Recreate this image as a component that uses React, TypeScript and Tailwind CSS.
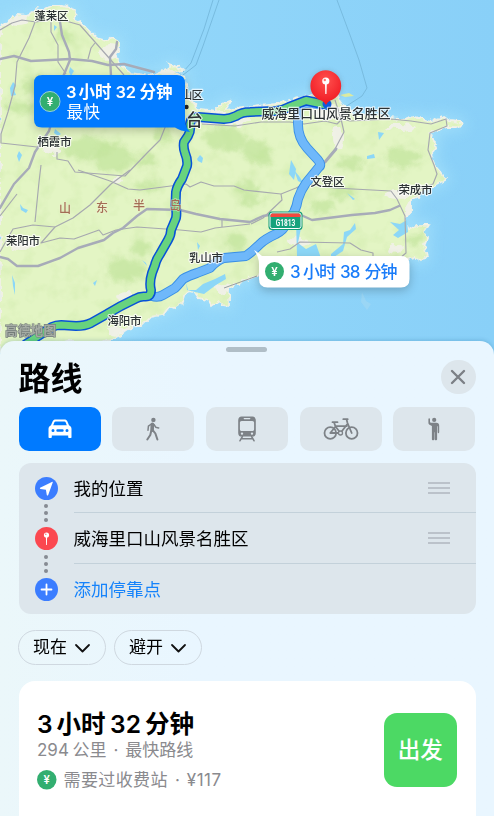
import React from "react";

const cjk = "font-['Inter','Noto_Sans_CJK_SC',sans-serif]";

const LAND =
  "M0 27L7 23L11 18L17 15L25 16L32 13L36 9L44 11L52 6L63 6L75 10L74 19L83 25L90 32L97 38L107 41L112 37L119 41L119 50L116 55L120 65L130 73L150 76L162 71L168 70L172 67L167 62L180 68L183 70L173 73L184 77L189 98L200 110L217 112L220 105L230 101L225 110L244 108L277 104L304 97L320 94L336 91L339 100L343 106L355 114L391 118L404 120L414 117L431 121L444 117L450 121L461 122L462 125L457 127L447 127L431 133L430 137L437 144L431 153L433 160L436 167L442 174L446 179L434 186L421 190L417 197L411 200L411 213L405 218L407 230L416 225L428 225L424 231L427 237L424 245L427 255L421 262L414 257L407 259L400 259L385 263L340 265L260 275L250 278L238 284L229 287L229 306L222 305L219 300L211 306L208 301L199 298L195 292L187 291L183 303L174 309L169 307L163 315L150 317L141 326L134 326L120 335L105 341L90 345L70 347L55 354L0 354Z";

const ROADS = [
  "M0 30L12 23L22 20L36 22L58 18L66 21L80 25L95 42L124 75",
  "M35 22L29 38L17 62L15 86L8 112L1 134L1 143L37 147",
  "M51 22L51 32L58 45L58 62L66 74",
  "M95 43L91 48L88 59",
  "M57 152L57 159L68 161L75 172L125 176L148 152L160 140L168 120",
  "M78 170L110 181L128 189L140 190L186 184L190 187L201 182L214 186L234 186L244 190L281 194L296 188L304 184",
  "M41 165L39 182L35 222",
  "M130 170L111 184L90 205L73 218L55 227L33 225L13 229L0 252",
  "M55 227L41 243L60 238L74 239L99 230L103 235L116 230L137 227L180 230L201 232L215 228L250 224",
  "M202 124L235 126L261 122L290 122L304 124L325 121L337 124L342 119L350 121L391 119L411 121L431 124L446 119L447 126L430 133L428 150L434 165L437 174L433 184L420 189L397 191",
  "M335 100L341 119L344 132L335 149L328 158",
  "M304 184L315 185L334 188L391 191L397 199L405 216L406 253L400 258",
  "M281 194L282 200L263 218L251 224",
  "M277 252L290 249L300 242L350 243L361 250L373 253L373 262",
  "M222 219L222 227",
  "M0 216L17 194",
];

const TRUNKS = [
  "M0 59L14 56L31 61L70 59L92 61L108 65L124 64L154 72",
  "M60 22L62 35L69 52L70 60L60 84L55 110L49 131L35 152L29 168L14 184L0 208",
  "M117 42L116 49L110 57L111 76",
  "M0 257L8 259L17 266L38 266L60 258L78 248L104 240L113 233L123 228L137 216L147 209L180 210L196 214L220 219L250 222L263 216L281 213L301 215L312 220L352 215L375 213L390 210L399 206",
];

const LAKES = [
  "M13 82l3 3l-2 5l2 5l-5 1l-1-8z",
  "M54 25l3 2l-3 4z",
  "M70 67l4 4l-3 5l-2-4z",
  "M19 151l3 4l-3 7l-2-6z",
  "M55 129l6 5l-3 2l-4-3z",
  "M197 159l3-4l3 3l-1 5l-4-2z",
  "M20 204l3 4l5 2l-2 3l-5-3z",
  "M12 275l3 8l0 12l-2-9z",
  "M93 283l4-3l-2 6z",
  "M142 260l4 3l1 3z",
  "M197 242l3 4l-2 4z",
  "M378 132l6 1l-5 7z",
  "M367 156l7-2l1 4l-8 1z",
  "M291 160l5 9l-2 11l-5-6z",
  "M347 193l8 6l-2 1z",
  "M236 11l2 3z",
  "M390 222l10 2l7-4l1 12l-10 6l-5-3l6-5z",
  "M294 170l5 6l5 8l-6-3z",
  "M296 220l5 8l-3 15l8 6l10-5l5 14l-24-2z",
  "M355 223l-5 7l-6 2l-1 12l-12 10l0 5l12-8l4-14l9-8z",
  "M186 282l2 8l8 0l7-6l12-5l10-5l1 5l-10 6l-12 9l-9-2l-8-2z",
];

const HILLS: [number, number, number, number][] = [
  [41, 87, 18, 10], [90, 92, 28, 10], [88, 148, 26, 11], [113, 157, 20, 14],
  [18, 107, 14, 7], [126, 270, 19, 12], [142, 248, 10, 7], [148, 186, 14, 6],
  [225, 138, 22, 12], [255, 150, 14, 10], [237, 243, 9, 12], [246, 189, 12, 8],
  [403, 157, 18, 10], [350, 163, 13, 7], [263, 159, 10, 7], [342, 193, 12, 6],
  [323, 207, 13, 6], [416, 240, 9, 5], [65, 35, 8, 7], [162, 135, 9, 9],
  [145, 161, 12, 7], [252, 201, 12, 5],
];

const URBAN: [number, number, number, number][] = [
  [24, 245, 12, 6], [52, 150, 7, 4], [127, 298, 9, 6], [208, 258, 8, 4],
  [225, 120, 25, 6], [398, 194, 12, 5], [330, 113, 20, 7], [338, 137, 5, 13],
  [110, 52, 12, 8], [170, 74, 12, 5], [400, 127, 15, 3], [120, 331, 14, 4],
  [75, 343, 15, 3], [222, 288, 10, 4], [300, 242, 12, 4], [410, 212, 4, 11],
  [118, 181, 5, 3], [395, 249, 8, 5], [18, 20, 12, 4],
];

const MAIN = "M10 355L26 344Q31 341 38 336L52 327Q56 325 61 325L76 326Q85 326 91 323L107 314Q120 306 135 299Q140 296 145 296.500Q151 297 151 290Q149 283 152 273L155 265Q156 260 160 254L168 240Q171 235 171 230Q174 223 176 218Q177 212 175.500 206L176 192Q177 186 182 179L187 166Q188 160 185 153Q183 147 184 142L188 136Q191 131 190 124Q191 117 198 117L224 119Q230 119 236 116Q242 112 250 112L276 111Q284 110 289 107L306 100.500L318 103L326 105";
const ALT = "M152 296Q158 298 163 295L175 288Q178 285 183 279Q188 276 197 273L210 268Q216 261 224 258L246 256Q253 251 260 244Q265 239 276 234Q284 230 286 224Q290 217 294 212Q297 206 298 199Q301 190 306 183L319 167Q322 165 318 160L307 148Q298 138 298 124L298 112Q299 103 308 103L326 105";

function Label({ x, y, children, size = 11.5, width }: { x: number; y: number; children: string; size?: number; width?: number }) {
  return (
    <text x={x} y={y} fontSize={size} textLength={width} textAnchor="middle" fontWeight="500" fill="#2c3234" stroke="#ffffff" strokeWidth="2.2" strokeOpacity=".75" strokeLinejoin="round" paintOrder="stroke">
      {children}
    </text>
  );
}

function YenDot({ cx, cy, r, ring }: { cx: number; cy: number; r: number; ring?: boolean }) {
  return (
    <g>
      <circle cx={cx} cy={cy} r={r} fill="#32ae70" stroke={ring ? "#9bd3d5" : "none"} strokeWidth="1" />
      <text x={cx} y={cy + 4.2} textAnchor="middle" fontSize="11.5" fontWeight="600" fill="white">¥</text>
    </g>
  );
}

function RouteMap() {
  return (
    <svg width="494" height="353" viewBox="0 0 494 353" className={`block shrink-0 ${cjk}`} colorInterpolationFilters="sRGB">
      <defs>
        <clipPath id="land"><path d={LAND} /></clipPath>
        <filter id="soft" x="-30%" y="-30%" width="160%" height="160%"><feGaussianBlur stdDeviation="2.6" /></filter>
        <filter id="shore" x="-10%" y="-10%" width="120%" height="120%"><feGaussianBlur stdDeviation="7" /></filter>
        <filter id="rough" x="-10%" y="-10%" width="120%" height="120%">
          <feTurbulence type="fractalNoise" baseFrequency=".11" numOctaves="2" seed="4" result="n" />
          <feDisplacementMap in="SourceGraphic" in2="n" scale="12" xChannelSelector="R" yChannelSelector="G" />
        </filter>
        <filter id="coast" x="-5%" y="-5%" width="110%" height="110%">
          <feTurbulence type="fractalNoise" baseFrequency=".17" numOctaves="2" seed="9" result="n" />
          <feDisplacementMap in="SourceGraphic" in2="n" scale="7" xChannelSelector="R" yChannelSelector="G" />
        </filter>
        <filter id="relief" x="0" y="0" width="100%" height="100%">
          <feTurbulence type="fractalNoise" baseFrequency=".06" numOctaves="3" seed="12" />
          <feColorMatrix values="0 0 0 0 .74  0 0 0 0 .88  0 0 0 0 .58  2.2 0 0 0 -1.05" />
        </filter>
        <filter id="shade" x="-20%" y="-30%" width="140%" height="180%"><feDropShadow dx="0" dy="3" stdDeviation="5" floodOpacity=".22" /></filter>
        <linearGradient id="sea" x1="0" y1="0" x2="1" y2="0"><stop stopColor="#96d9fa" /><stop offset="1" stopColor="#89d0f8" /></linearGradient>
        <radialGradient id="pin" cx=".5" cy=".3" r=".7"><stop stopColor="#ff514e" /><stop offset="1" stopColor="#ef1721" /></radialGradient>
      </defs>
      <rect width="494" height="353" fill="url(#sea)" />
      <path d={LAND} fill="#a4e1fb" stroke="#a4e1fb" strokeWidth="8" filter="url(#shore)" opacity=".8" />
      <g fill="none" stroke="#78bbdf" strokeWidth="1">
        <path d="M213 0L204 29L191 63L183 72M219 0L203 46L196 65L183 75" />
        <path d="M337 0L350 35L359 60L367 88L362 96L345 107" />
      </g>
      <path d={LAND} fill="#e3f5c4" stroke="#f1f1e8" strokeWidth="1.8" filter="url(#coast)" />
      <g clipPath="url(#land)">
        <rect width="494" height="353" filter="url(#relief)" opacity=".3" />
        <g filter="url(#rough)"><g filter="url(#soft)" fill="#c3e49d">
          {HILLS.map(([x, y, rx, ry]) => <ellipse key={`${x}-${y}`} cx={x} cy={y} rx={rx} ry={ry} opacity=".75" />)}
        </g></g>
        <g filter="url(#rough)" fill="#f2f0ec">
          {URBAN.map(([x, y, rx, ry]) => <ellipse key={`${x}-${y}`} cx={x} cy={y} rx={rx} ry={ry} opacity=".85" />)}
        </g>
      </g>
      <g fill="#8cd7f7">{LAKES.map((d) => <path key={d} d={d} />)}</g>
      <path d="M340 95l9-2l5 3l-9 1z" fill="#dceaa0" />
      <path d="M362 292l4 9l5 3l-4 6l-6-8z" fill="#aeddef" opacity=".4" />
      <g fill="none" stroke="#a6a8af" strokeWidth="1.15" strokeLinejoin="round">{ROADS.map((d) => <path key={d} d={d} />)}</g>
      <g fill="none" stroke="#a7abb8" strokeWidth="2.4" strokeLinejoin="round" strokeLinecap="round">{TRUNKS.map((d) => <path key={d} d={d} />)}<path d="M325 162L336 149" strokeWidth="3" /></g>
      <path d="M224 288L257 276" stroke="#999da0" strokeWidth="1" />

      <g fill="none" strokeLinejoin="round" strokeLinecap="round">
        <path d={ALT} stroke="#388fe6" strokeWidth="9.8" />
        <path d={ALT} stroke="#6fb8fa" strokeWidth="8" />
        <path d={MAIN} stroke="#0751d8" strokeWidth="10" />
        <path d={MAIN} stroke="#68d37e" strokeWidth="7" />
      </g>
      <circle cx="327" cy="104" r="4.5" fill="#0d5ce0" />

      <Label x={51.5} y={20} width={34}>蓬莱区</Label>
      <Label x={192} y={99} width={22}>山区</Label>
      <circle cx="186.5" cy="107" r="2.2" fill="#222" />
      <Label x={194.5} y={126} size={16.5}>台</Label>
      <Label x={54.5} y={146} width={34}>栖霞市</Label>
      <Label x={23} y={245} width={34}>莱阳市</Label>
      <Label x={206} y={262} width={34}>乳山市</Label>
      <Label x={124.5} y={325} width={34}>海阳市</Label>
      <Label x={327.5} y={185.5} width={34}>文登区</Label>
      <Label x={415.5} y={193.5} width={34}>荣成市</Label>
      <Label x={326} y={118} size={12.8} width={129}>威海里口山风景名胜区</Label>
      <g fontSize="12" fill="#a36d55" stroke="#f3eed2" strokeWidth="1" strokeOpacity=".6" paintOrder="stroke" textAnchor="middle" fontWeight="500">
        <text x="65" y="213">山</text><text x="102" y="211.5">东</text><text x="139" y="210">半</text><text x="175.5" y="209.5">岛</text>
      </g>
      <text x="5" y="335" fontSize="12.6" textLength="51" fontWeight="700" fill="#a5aca4" stroke="#747c7a" strokeWidth="1.1" paintOrder="stroke">高德地图</text>

      <rect x="268.5" y="211.5" width="34" height="18.5" rx="3.5" fill="#109b75" />
      <rect x="270" y="213" width="31" height="15.5" rx="2.2" fill="#16a27c" stroke="#fff" strokeWidth="1" />
      <path d="M270.500 217v-1.500q0-2 2-2h26q2 0 2 2v1.500z" fill="#f3483f" />
      <text x="285.5" y="225.5" textAnchor="middle" fontSize="8.2" textLength="19.5" lengthAdjust="spacingAndGlyphs" fontWeight="700" fill="#fff" className="font-['Roboto']">G1813</text>

      <g filter="url(#shade)">
        <path d="M42 75H177Q185 75 185 83V121Q185 127 190 132Q180 131 175 127.500H42Q34 127.500 34 119.500V83Q34 75 42 75Z" fill="#007aff" />
      </g>
      <YenDot cx={50} cy={101.5} r={10} ring />
      <g fill="white" fontWeight="600" fontSize="16.5">
        <text x="66" y="97.5">3</text><text x="78.5" y="97.5" textLength="33">小时</text>
        <text x="115.5" y="97.5" textLength="20.5">32</text><text x="139.5" y="97.5" textLength="33">分钟</text>
        <text x="66.5" y="118" fontWeight="400" textLength="33.5">最快</text>
      </g>

      <g filter="url(#shade)">
        <path d="M254 250Q256 251 262 256H401Q409.500 256 409.500 264.500V279Q409.500 287.500 401 287.500H267.500Q259 287.500 259 279V264Q259 257 254 250Z" fill="#fff" />
      </g>
      <YenDot cx={274.5} cy={271.5} r={9.5} />
      <g fill="#1a7cf9" fontWeight="500" fontSize="17">
        <text x="290" y="278">3</text><text x="303" y="278" textLength="33">小时</text>
        <text x="340" y="278" textLength="20.5">38</text><text x="364.5" y="278" textLength="33">分钟</text>
      </g>

      <circle cx="325.8" cy="86.5" r="16" fill="#555" opacity=".25" filter="url(#soft)" />
      <path d="M325.800 70.200a15.500 15.500 0 0 1 4.500 30.300Q327.500 101.500 326 105Q324.200 101.500 321.300 100.500A15.500 15.500 0 0 1 325.800 70.200Z" fill="url(#pin)" />
      <circle cx="325.8" cy="81" r="3.6" fill="#fff" /><circle cx="324.8" cy="80" r="1.2" fill="#ff7471" />
      <path d="M325 84h1.800l-.3 10h-1.200z" fill="#fff" />
    </svg>
  );
}

const CarIcon = () => (
  <svg width="26" height="22" viewBox="0 0 26 22" fill="none">
    <path fillRule="evenodd" d="M8.600 1.500h8.800c1.400 0 2.300.5 2.900 1.700l1.700 4c1.600.8 2.500 2 2.500 3.900v7.800c0 .8-.4 1.200-1.200 1.200h-.9c-.8 0-1.200-.5-1.200-1.200v-1.400H4.800v1.400c0 .7-.5 1.200-1.200 1.200h-.9c-.8 0-1.200-.5-1.200-1.200v-7.800c0-1.900.9-3.100 2.500-3.900l1.700-4c.6-1.200 1.500-1.700 2.900-1.700ZM7.400 4.300 6.200 7.200h13.600l-1.200-2.900c-.2-.6-.6-.8-1.200-.8H8.600c-.6 0-1 .2-1.200.8ZM6 11a1.500 1.500 0 1 0 0 3 1.500 1.500 0 0 0 0-3Zm14 0a1.500 1.500 0 1 0 0 3 1.500 1.500 0 0 0 0-3Zm-9.500.3a1.200 1.200 0 0 0 0 2.400h5a1.200 1.200 0 0 0 0-2.400Z" fill="white" />
  </svg>
);
const WalkIcon = () => (
  <svg width="18" height="24" viewBox="0 0 18 24" fill="none" stroke="#7d8287" strokeLinecap="round" strokeLinejoin="round">
    <circle cx="9.4" cy="2.9" r="2.2" fill="#7d8287" stroke="none" />
    <path d="m8.400 7.200-.3 6" strokeWidth="3.600" />
    <path d="m7.400 7-3 2.200-.4 4M10 7.500l1.700 2.700 3 .7" strokeWidth="1.500" />
    <path d="m8.900 13.300 2.500 3.200 2 6M7.200 14l-.9 4-3 4.500" strokeWidth="2" />
  </svg>
);
const TrainIcon = () => (
  <svg width="22" height="26" viewBox="0 0 22 26" fill="none">
    <path fillRule="evenodd" d="M5.500.6h11c1.900 0 3.300 1.700 3.300 3.800v12.500c0 2.200-1.200 3.700-3.300 3.700h-11c-2.100 0-3.300-1.500-3.300-3.700V4.400C2.200 2.300 3.600.6 5.500.6Zm2.800 1.300a.7.7 0 0 0 0 1.400h5.400a.7.7 0 0 0 0-1.400ZM5.700 4.900c-1.100 0-1.800.7-1.800 1.800v6.500c0 1.100.7 1.800 1.800 1.800h10.600c1.100 0 1.800-.7 1.800-1.800V6.700c0-1.100-.7-1.800-1.800-1.800ZM6 16.400a1.200 1.200 0 1 0 0 2.400 1.200 1.200 0 0 0 0-2.400Zm10 0a1.200 1.200 0 1 0 0 2.400 1.200 1.200 0 0 0 0-2.400Z" fill="#7d8287" />
    <path d="m6.400 20.500-2.500 4.300M15.600 20.500l2.500 4.300M5.500 22.700h11" stroke="#7d8287" strokeWidth="1.500" strokeLinecap="round" />
  </svg>
);
const BikeIcon = () => (
  <svg width="36" height="24" viewBox="0 0 36 24" fill="none" stroke="#7d8287" strokeWidth="1.800" strokeLinecap="round" strokeLinejoin="round">
    <circle cx="7.3" cy="16" r="5.8" /><circle cx="28.7" cy="16" r="5.8" />
    <path d="m7.300 16 5.200-6.500 5 6.500H7.300m5.200-6.500-1.500-4.300M9.500 5.200h5M12.700 9.200h11M17.500 16l6.500-8.500M28.700 16 24.500 6l-1-3.800h-3.200M23.500 2.200h1.200" />
    <circle cx="17.5" cy="16" r="2" fill="#dde6ec" strokeWidth="1.300" />
  </svg>
);
const HailIcon = () => (
  <svg width="14" height="24" viewBox="0 0 14 24" fill="#7d8287">
    <circle cx="7.2" cy="2.9" r="2.1" />
    <path d="M3.700 5.800h5.500c2 0 3 1.300 3 3v6.500c0 1.200-1.500 1.200-1.500 0v-6h-.6v13c0 1.400-2.400 1.400-2.400 0v-7h-.4v7c0 1.400-2.400 1.400-2.400 0V9L2.500 7.700c-.9-.5-1.100-1.300-1.100-2.400V2.100c0-1.100 1.600-1.100 1.600 0v3Z" />
  </svg>
);

const MODES = [CarIcon, WalkIcon, TrainIcon, BikeIcon, HailIcon];

const Grip = () => (
  <svg className="mr-[25.5px] shrink-0" width="22" height="12" viewBox="0 0 22 12" stroke="#b0b7bf" strokeWidth="1.300"><path d="M0 1h22M0 6h22M0 11h22" /></svg>
);
const Dots = () => (
  <div className="flex h-[27.5px] flex-col items-center justify-center gap-[3.4px]">
    <i className="size-[3.6px] rounded-full bg-[#868b93]" /><i className="size-[3.6px] rounded-full bg-[#868b93]" /><i className="size-[3.6px] rounded-full bg-[#868b93]" />
  </div>
);

function Chip({ label }: { label: string }) {
  return (
    <button className="flex h-[35px] w-[88px] items-center justify-center gap-[7px] rounded-full border border-[#cfd8e0] pt-px text-[17px] text-black">
      <span>{label}</span>
      <svg width="17" height="11" viewBox="0 0 17 11" fill="none" stroke="#111" strokeWidth="1.800" strokeLinecap="round" strokeLinejoin="round"><path d="m2 2 6.500 6.500L15 2" /></svg>
    </button>
  );
}

function Stops() {
  return (
    <section className="mt-3 flex h-[151px] shrink-0 rounded-xl bg-[#dde6ec]">
      <div className="flex w-[55px] shrink-0 flex-col items-center pt-[13.5px]">
        <svg className="shrink-0" width="23" height="23" viewBox="0 0 23 23"><circle cx="11.5" cy="11.5" r="11.5" fill="#3b7dff" /><path d="M17.700 5.600 13.200 17.900c-.4.900-1.200.9-1.400 0l-.9-5.100-5.300-.8c-1-.2-1-1.100 0-1.500L16.900 4.900c.7-.2 1.100.1.800.7Z" fill="#fff" /></svg>
        <Dots />
        <svg className="shrink-0" width="23" height="23" viewBox="0 0 23 23"><circle cx="11.5" cy="11.5" r="11.5" fill="#fb4850" /><circle cx="11.5" cy="8" r="2.6" fill="#fff" /><circle cx="10.8" cy="7.3" r=".8" fill="#fb7a7d" /><path d="M10.900 10h1.200l-.2 8h-.8z" fill="#fff" /></svg>
        <Dots />
        <svg className="shrink-0" width="23" height="23" viewBox="0 0 23 23"><circle cx="11.5" cy="11.5" r="11.5" fill="#3b7dff" /><path d="M11.500 6.500v10M6.500 11.500h10" stroke="#fff" strokeWidth="1.800" strokeLinecap="round" /></svg>
      </div>
      <div className="flex flex-1 flex-col text-[17.5px] leading-[25px] text-black">
        <div className="flex h-[50px] items-center justify-between border-b border-[#c3d1da] pt-px"><span>我的位置</span><Grip /></div>
        <div className="flex h-[50.5px] items-center justify-between border-b border-[#c3d1da] pt-px"><span>威海里口山风景名胜区</span><Grip /></div>
        <div className="flex h-[50px] items-center pt-px text-[#1583fb]">添加停靠点</div>
      </div>
    </section>
  );
}

export default function App() {
  return (
    <main className={`flex h-[816px] w-[494px] flex-col overflow-hidden bg-[#8fd5f8] ${cjk}`}>
      <RouteMap />
      <div className="relative -mt-3 flex h-[475px] shrink-0 flex-col rounded-t-[14px] bg-[#e9f6fe] bg-linear-to-r from-[#ebf7fa] to-[#e9f6ff] to-40% px-[18.5px] shadow-[0_-1px_4px_rgba(0,80,130,.2)]">
        <div className="mt-[6px] mr-[1px] h-[5px] w-[41px] shrink-0 self-center rounded-full bg-[#b0bec7]" />
        <header className="mt-1 flex h-[51px] shrink-0 items-center justify-between">
          <h1 className="mb-[5px] text-[32px] leading-[46px] font-bold text-black">路线</h1>
          <button aria-label="关闭" className="mb-[9px] flex size-[34.5px] items-center justify-center rounded-full bg-[#dde6ec]">
            <svg width="18" height="18" viewBox="0 0 18 18" fill="none" stroke="#7c8086" strokeWidth="2.400" strokeLinecap="round"><path d="m3 3 12 12M15 3 3 15" /></svg>
          </button>
        </header>
        <nav className="grid h-11 shrink-0 grid-cols-5 gap-[11.5px]">
          {MODES.map((Icon, i) => (
            <button key={i} className={`flex items-center justify-center rounded-[10px] ${i === 0 ? "bg-[#007aff]" : "bg-[#dde6ec]"}`}><Icon /></button>
          ))}
        </nav>
        <Stops />
        <div className="-ml-[0.5px] mt-4 flex shrink-0 gap-2"><Chip label="现在" /><Chip label="避开" /></div>
        <section className="mt-4 flex h-[150px] shrink-0 justify-between rounded-t-2xl bg-white px-[18.5px]">
          <div className="pt-[27px]">
            <h2 className="flex h-[32px] items-center text-[24.5px] leading-[32px] font-bold text-black"><span className="font-semibold">3</span><span className="ml-[4px]">小时</span><span className="ml-[4.5px] font-semibold">32</span><span className="ml-[4px]">分钟</span></h2>
            <p className="flex h-[20px] items-center text-[17px] leading-[20px] text-[#8a8a8e]"><span>294</span><span className="ml-[3.5px]">公里</span><span className="mx-[7px]">·</span><span>最快路线</span></p>
            <p className="mt-[9px] flex h-[22px] items-center text-[17px] leading-[22px] text-[#8a8a8e]">
              <svg className="mr-[7px]" width="19.5" height="19.5" viewBox="0 0 20 20"><YenDot cx={10} cy={10} r={10} /></svg>
              <span className="tracking-[0.4px]">需要过收费站</span><span className="mx-[7px]">·</span><span className="tracking-[0.5px]">¥117</span>
            </p>
          </div>
          <button className="mt-8 flex size-[73.5px] items-center justify-center rounded-[13px] bg-[#4cd964] text-[22.5px] font-medium text-white">出发</button>
        </section>
      </div>
    </main>
  );
}
